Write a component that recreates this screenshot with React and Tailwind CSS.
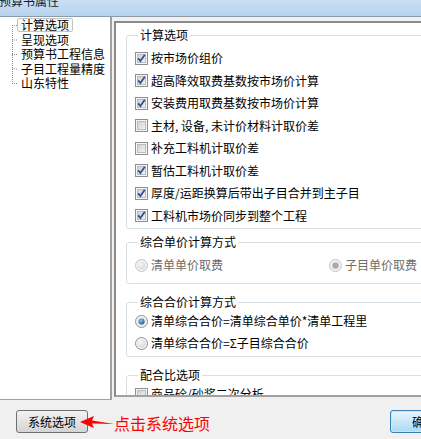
import React from 'react'

const font = { fontFamily: '"Noto Sans CJK SC", "Liberation Sans", sans-serif' }

function CheckBox({ checked }) {
  return (
    <svg width="13" height="13" viewBox="0 0 13 13" className="shrink-0">
      <defs>
        <linearGradient id="cbIn" x1="0" y1="0" x2="1" y2="1">
          <stop offset="0" stopColor="#cbcfd5" />
          <stop offset="1" stopColor="#f4f5f6" />
        </linearGradient>
      </defs>
      <rect x="0.5" y="0.5" width="12" height="12" fill="#f6f6f6" stroke="#8e8f8f" />
      <rect x="2.5" y="2.5" width="8" height="8" fill="url(#cbIn)" stroke="#b9bcc0" />
      {checked && (
        <path d="M3.2 6.4 L5.4 9 L9.8 2.8" fill="none" stroke="#3a4f8c" strokeWidth="1.8" />
      )}
    </svg>
  )
}

function Radio({ checked, disabled }) {
  const ring = disabled ? '#c2c2c2' : '#8e8f8f'
  const dot = disabled ? '#a8a8a8' : '#1d63b0'
  return (
    <svg width="13" height="13" viewBox="0 0 13 13" className="shrink-0">
      <defs>
        <radialGradient id="rdIn" cx="0.4" cy="0.35" r="0.7">
          <stop offset="0" stopColor="#f8f8f8" />
          <stop offset="1" stopColor="#d3d6da" />
        </radialGradient>
        <radialGradient id="rdDot" cx="0.4" cy="0.35" r="0.7">
          <stop offset="0" stopColor="#8ac6f5" />
          <stop offset="1" stopColor="#1d57a0" />
        </radialGradient>
      </defs>
      <circle cx="6.5" cy="6.5" r="6" fill="#f4f4f4" stroke={ring} />
      <circle cx="6.5" cy="6.5" r="4" fill="url(#rdIn)" />
      {checked && <circle cx="6.5" cy="6.5" r="3" fill={disabled ? dot : 'url(#rdDot)'} />}
    </svg>
  )
}

function CheckRow({ checked, label }) {
  return (
    <div className="flex items-center h-[22.5px]">
      <CheckBox checked={checked} />
      <span className="ml-[3px] text-[12px] leading-[14px] text-black whitespace-nowrap">{label}</span>
    </div>
  )
}

function RadioItem({ checked, disabled, label }) {
  return (
    <div className="flex items-center">
      <Radio checked={checked} disabled={disabled} />
      <span className={`ml-[3px] text-[12px] leading-[14px] whitespace-nowrap ${disabled ? 'text-[#6d6d6d]' : 'text-black'}`}>
        {label}
      </span>
    </div>
  )
}

function Group({ title, className, children }) {
  return (
    <fieldset className={`w-[330px] border border-[#d5dfe5] rounded-[3px] pl-[8px] ${className}`}>
      <legend className="ml-[3px] px-[2px] text-[12px] leading-[14px] text-black">{title}</legend>
      {children}
    </fieldset>
  )
}

const calcOptions = [
  { checked: true, label: '按市场价组价' },
  { checked: true, label: '超高降效取费基数按市场价计算' },
  { checked: true, label: '安装费用取费基数按市场价计算' },
  { checked: false, label: '主材, 设备, 未计价材料计取价差' },
  { checked: false, label: '补充工料机计取价差' },
  { checked: true, label: '暂估工料机计取价差' },
  { checked: true, label: '厚度/运距换算后带出子目合并到主子目' },
  { checked: true, label: '工料机市场价同步到整个工程' },
]

const treeItems = ['计算选项', '呈现选项', '预算书工程信息', '子目工程量精度', '山东特性']

export default function App() {
  return (
    <div className="w-[421px] h-[439px] overflow-hidden bg-[#f0f0f0] flex flex-col" style={font}>
      {/* title bar */}
      <div className="h-[17px] shrink-0 bg-gradient-to-b from-[#c9dff4] to-[#b8d3ee] border-b border-[#8d9aa8] overflow-hidden">
        <div className="-mt-[5px] -ml-[1px] text-[12px] leading-[12px] text-[#1a1a1a]">预算书属性</div>
      </div>

      {/* body */}
      <div className="flex h-[383px] shrink-0">
        {/* tree */}
        <div className="w-[112px] shrink-0 bg-white border-r-2 border-b border-[#a0a0a0] pt-[1px]">
          <div className="flex">
            <svg width="17" height="73" viewBox="0 0 17 73" className="shrink-0">
              <g stroke="#8a8a8a" strokeWidth="1" strokeDasharray="1 1">
                <line x1="12.5" y1="7" x2="12.5" y2="66" />
                {treeItems.map((_, i) => (
                  <line key={i} x1="12" y1={7.5 + i * 14.5} x2="17" y2={7.5 + i * 14.5} />
                ))}
              </g>
            </svg>
            <div className="flex flex-col">
              {treeItems.map((t, i) => (
                <div key={t} className="h-[14.5px] flex items-center">
                  <span
                    className={`h-[14px] px-[3px] border rounded-[2px] text-[12px] leading-[12px] flex items-center whitespace-nowrap text-black ${
                      i === 0 ? 'border-[#c3c3c3] bg-[#fafafa]' : 'border-transparent'
                    }`}
                  >
                    {t}
                  </span>
                </div>
              ))}
            </div>
          </div>
        </div>

        {/* options panel */}
        <div className="ml-[2px] mt-[4px] w-[330px] h-[376px] shrink-0 bg-white border-t-2 border-l-2 border-b-2 border-t-[#8a8a8a] border-l-[#8a8a8a] border-b-[#a0a0a0] overflow-hidden pl-[10px] pt-[5px]">
          <Group title="计算选项" className="pt-[5px] pb-[1px]">
            {calcOptions.map((o) => (
              <CheckRow key={o.label} checked={o.checked} label={o.label} />
            ))}
          </Group>

          <Group title="综合单价计算方式" className="mt-[6px] pt-[5px] pb-[7px]">
            <div className="flex items-center h-[22px]">
              <div className="w-[194px]">
                <RadioItem disabled label="清单单价取费" />
              </div>
              <RadioItem disabled checked label="子目单价取费" />
            </div>
          </Group>

          <Group title="综合合价计算方式" className="mt-[11px] pt-[1px] pb-[2px]">
            <div className="flex items-center h-[22px]">
              <RadioItem checked label="清单综合合价=清单综合单价*清单工程里" />
            </div>
            <div className="flex items-center h-[22px]">
              <RadioItem label="清单综合合价=Σ子目综合合价" />
            </div>
          </Group>

          <Group title="配合比选项" className="mt-[11px] pt-[1px]">
            <CheckRow checked={false} label="商品砼/砂浆二次分析" />
          </Group>
        </div>
      </div>

      {/* bottom bar */}
      <div className="flex items-start pt-[10px] pl-[16px] w-[480px]">
        <button className="w-[72px] h-[23px] shrink-0 rounded-[3px] border border-[#707070] bg-gradient-to-b from-[#f2f2f2] to-[#d4d4d4] text-[12px] leading-[12px] text-black">
          系统选项
        </button>
        <svg width="34" height="16" viewBox="0 0 34 16" className="shrink-0 -ml-[8px] mt-[4px] relative z-10">
          <polygon points="0,8 14,2 12,6.5 34,10 12,9.5 14,14" fill="#ff0000" />
        </svg>
        <span className="mt-[4px] text-[16px] leading-[18px] text-[#ff0000] whitespace-nowrap">点击系统选项</span>
        <button className="ml-[180px] w-[68px] h-[23px] shrink-0 rounded-[3px] border border-[#3c7fb1] bg-gradient-to-b from-[#eaf6fd] to-[#a9daf5] shadow-[inset_0_0_0_1px_#c5e7fa] text-[12px] leading-[12px] text-black">
          确定
        </button>
      </div>
    </div>
  )
}
